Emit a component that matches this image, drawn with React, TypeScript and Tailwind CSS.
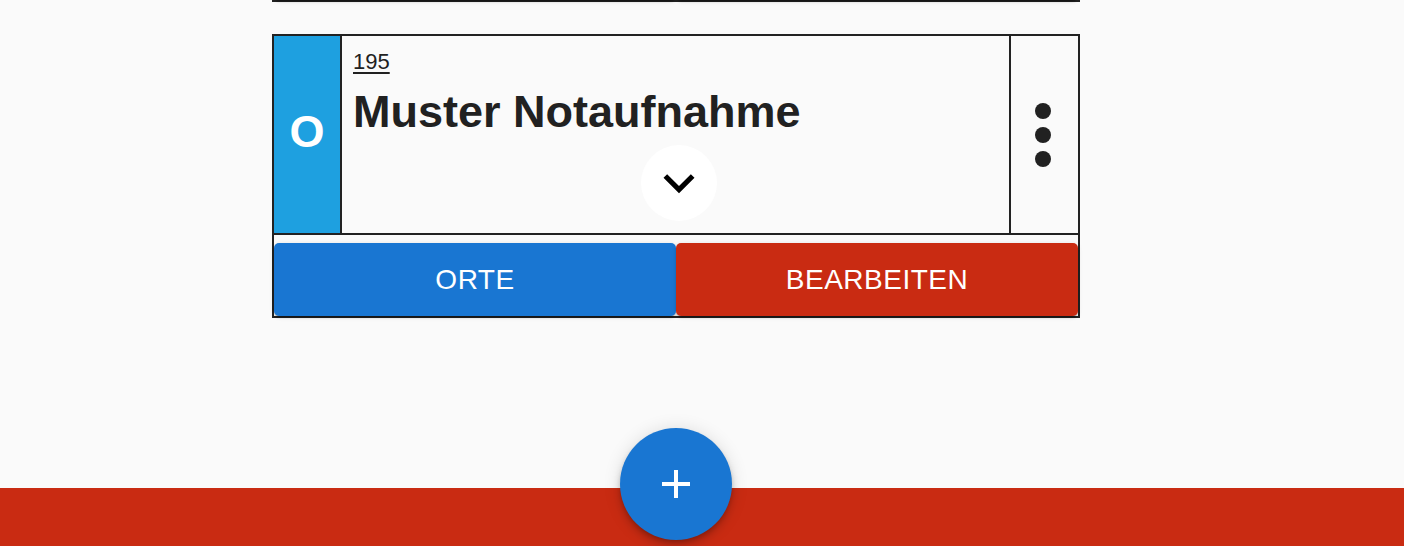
import React from "react";

const btnShadow =
  "shadow-[0_3px_1px_-2px_rgba(0,0,0,0.2),0_2px_2px_0_rgba(0,0,0,0.14),0_1px_5px_0_rgba(0,0,0,0.12)]";

function ChevronDown() {
  return (
    <svg width="62" height="62" viewBox="0 0 24 24" aria-hidden="true">
      <path d="M16.59 8.59 12 13.17 7.41 8.59 6 10l6 6 6-6z" fill="#000" />
    </svg>
  );
}

function MoreVert() {
  return (
    <svg width="16" height="64" viewBox="0 0 16 64" aria-hidden="true">
      <circle cx="8" cy="8" r="8" fill="#212121" />
      <circle cx="8" cy="32" r="8" fill="#212121" />
      <circle cx="8" cy="56" r="8" fill="#212121" />
    </svg>
  );
}

function Plus() {
  return (
    <svg width="48" height="48" viewBox="0 0 24 24" aria-hidden="true">
      <path d="M19 13h-6v6h-2v-6H5v-2h6V5h2v6h6z" fill="#fff" />
    </svg>
  );
}

function Card() {
  return (
    <div className="ml-[272px] mt-[32px] w-[808px] border-2 border-[#222] bg-[#fafafa]">
      <div className="flex h-[197px]">
        <div className="flex w-[68px] items-center justify-center border-r-2 border-[#222] bg-[#1ea0e0] pb-[6px] text-[45px] font-bold leading-none text-white">
          O
        </div>
        <div className="flex flex-1 flex-col pl-[11px] pt-[15px] text-[#212121]">
          <div className="h-[22px] text-[22px] leading-[22px] underline underline-offset-[3px]">
            195
          </div>
          <div className="mt-[16px] h-[45px] text-[45px] font-bold leading-[45px]">
            Muster Notaufnahme
          </div>
          <div className="mr-[4px] mt-[11px] flex h-[76px] w-[76px] items-center justify-center self-center rounded-full bg-white">
            <ChevronDown />
          </div>
        </div>
        <div className="flex w-[69px] items-center justify-center border-l-2 border-[#222] pr-[3px]">
          <MoreVert />
        </div>
      </div>
      <div className="flex h-[83px] border-t-2 border-[#222] pt-[8px]">
        <div
          className={`flex h-[73px] flex-1 items-center justify-center rounded-[5px] bg-[#1976d2] text-[28px] tracking-[0.5px] text-white ${btnShadow}`}
        >
          ORTE
        </div>
        <div
          className={`flex h-[73px] flex-1 items-center justify-center rounded-[5px] bg-[#c92b12] text-[28px] tracking-[0.5px] text-white ${btnShadow}`}
        >
          BEARBEITEN
        </div>
      </div>
    </div>
  );
}

export default function App() {
  return (
    <div
      className="min-h-[546px] overflow-hidden bg-[#fafafa]"
      style={{ fontFamily: '"Liberation Sans", Arial, sans-serif' }}
    >
      {/* bottom of previous card */}
      <div className="-mt-[73px] ml-[272px] flex h-[75px] w-[808px] border-x-2 border-b-2 border-[#222] bg-[#fafafa]">
        <div className={`h-[73px] flex-1 rounded-[5px] bg-[#1976d2] ${btnShadow}`} />
        <div className={`h-[73px] flex-1 rounded-[5px] bg-[#c92b12] ${btnShadow}`} />
      </div>

      <Card />

      <div className="fixed bottom-0 left-0 right-0 h-[58px] bg-[#c92b12]">
        <div className="relative ml-[272px] h-full w-[808px]">
          <div className="absolute left-1/2 top-[-60px] flex h-[112px] w-[112px] -translate-x-1/2 items-center justify-center rounded-full bg-[#1976d2] shadow-[0_3px_5px_-1px_rgba(0,0,0,0.2),0_6px_10px_0_rgba(0,0,0,0.14),0_1px_18px_0_rgba(0,0,0,0.12)]">
            <Plus />
          </div>
        </div>
      </div>
    </div>
  );
}
